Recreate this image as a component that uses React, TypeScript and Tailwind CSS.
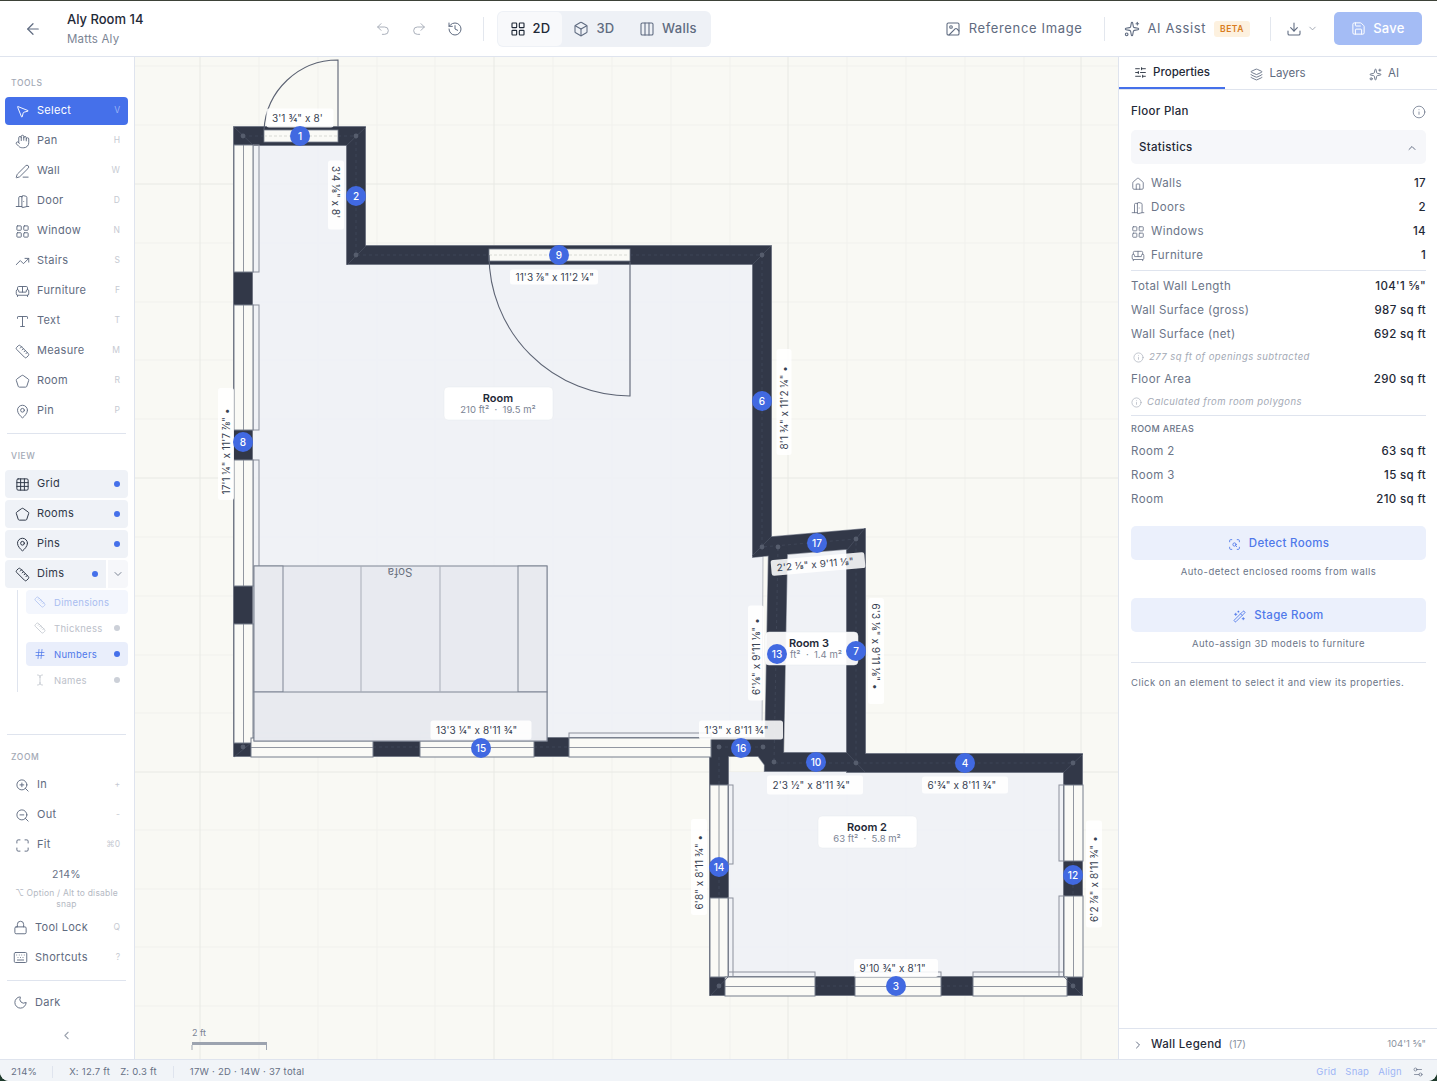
import {
  ArrowLeft, Undo2, Redo2, History, LayoutGrid, Box, Columns3, Image, Sparkles, Download, ChevronDown, ChevronUp, ChevronLeft, ChevronRight,
  Save, MousePointer2, Hand, PenLine, DoorOpen, TrendingUp, Sofa, Type, Ruler, Pentagon, MapPin, Grid3x3, Hash, TextCursor, ZoomIn, ZoomOut,
  Maximize, Lock, Keyboard, Moon, SlidersHorizontal, Layers, Info, Home, ScanSearch, WandSparkles, Settings2,
} from 'lucide-react'
import type { LucideIcon } from 'lucide-react'

const tools: [LucideIcon, string, string][] = [
  [MousePointer2, 'Select', 'V'],
  [Hand, 'Pan', 'H'],
  [PenLine, 'Wall', 'W'],
  [DoorOpen, 'Door', 'D'],
  [LayoutGrid, 'Window', 'N'],
  [TrendingUp, 'Stairs', 'S'],
  [Sofa, 'Furniture', 'F'],
  [Type, 'Text', 'T'],
  [Ruler, 'Measure', 'M'],
  [Pentagon, 'Room', 'R'],
  [MapPin, 'Pin', 'P'],
]

function ToolRow({ icon: Icon, label, hint, active }: { icon: LucideIcon; label: string; hint: string; active?: boolean }) {
  return (
    <div className={`flex items-center h-[28px] rounded-[4px] pl-[10px] pr-[8px] ${active ? 'bg-[#4570ea] text-white' : 'text-[#5f6b80]'}`}>
      <Icon className="w-[15px] h-[15px] shrink-0" strokeWidth={1.5} />
      <span className="ml-[7px] pb-[2px] text-[11px] tracking-[0.3px] flex-1">{label}</span>
      <span className={`pb-[2px] text-[8.5px] ${active ? 'text-[#9db4f5]' : 'text-[#c6cad2]'}`}>{hint}</span>
    </div>
  )
}

function ViewRow({ icon: Icon, label }: { icon: LucideIcon; label: string }) {
  return (
    <div className="flex items-center h-[28px] rounded-[4px] bg-[#eff2f7] text-[#2f3848] pl-[10px] pr-[8px]">
      <Icon className="w-[15px] h-[15px] shrink-0" strokeWidth={1.6} />
      <span className="ml-[7px] pb-[2px] text-[11px] tracking-[0.3px] flex-1">{label}</span>
      <span className="w-[6px] h-[6px] rounded-full bg-[#4570ea]" />
    </div>
  )
}

function SubRow({ icon: Icon, label, tone }: { icon: LucideIcon; label: string; tone: 'faded' | 'on' | 'off' }) {
  const cls = tone === 'on' ? 'bg-[#e9eefb] text-[#4f78ea]' : tone === 'faded' ? 'bg-[#f3f6fd] text-[#a9bdf0]' : 'text-[#bcc1ca]'
  return (
    <div className={`flex items-center h-[24px] rounded-[4px] pl-[8px] pr-[8px] ${cls}`}>
      <Icon className="w-[12px] h-[12px] shrink-0" strokeWidth={1.5} />
      <span className="ml-[8px] pt-[2px] text-[9.5px] tracking-[0.3px] flex-1">{label}</span>
      {tone !== 'faded' && <span className={`w-[6px] h-[6px] rounded-full ${tone === 'on' ? 'bg-[#4570ea]' : 'bg-[#ccd0d8]'}`} />}
    </div>
  )
}

function SectionLabel({ text }: { text: string }) {
  return <div className="h-[12px] leading-[12px] pl-[6px] text-[8.5px] font-medium tracking-[0.6px] text-[#a3a9b5]">{text}</div>
}

function Sidebar() {
  return (
    <aside className="w-[135px] shrink-0 border-r border-[#dfe4ee] bg-white px-[5px] pt-[20px] flex flex-col">
      <SectionLabel text="TOOLS" />
      <div className="mt-[8px] flex flex-col gap-[2px] w-[123px]">
        {tools.map(([icon, label, hint], i) => (
          <ToolRow key={label} icon={icon} label={label} hint={hint} active={i === 0} />
        ))}
      </div>
      <div className="mt-[8px] mx-[2px] w-[119px] border-t border-[#dfe4ee]" />
      <div className="mt-[16px]"><SectionLabel text="VIEW" /></div>
      <div className="mt-[8px] flex flex-col gap-[2px] w-[123px]">
        <ViewRow icon={Grid3x3} label="Grid" />
        <ViewRow icon={Pentagon} label="Rooms" />
        <ViewRow icon={MapPin} label="Pins" />
        <div className="flex gap-[2px]">
          <div className="w-[101px] flex items-center h-[28px] rounded-l-[4px] bg-[#eff2f7] text-[#2f3848] pl-[10px] pr-[8px]">
            <Ruler className="w-[15px] h-[15px] shrink-0" strokeWidth={1.6} />
            <span className="ml-[7px] pb-[2px] text-[11px] tracking-[0.3px] flex-1">Dims</span>
            <span className="w-[6px] h-[6px] rounded-full bg-[#4570ea]" />
          </div>
          <div className="w-[20px] h-[28px] flex items-center justify-center rounded-r-[4px] bg-[#f6f7fa] text-[#7b8494]">
            <ChevronDown className="w-[12px] h-[12px]" />
          </div>
        </div>
      </div>
      <div className="mt-[2px] ml-[12px] w-[111px] border-l border-[#dfe4ee] pl-[8px] flex flex-col gap-[2px]">
        <SubRow icon={Ruler} label="Dimensions" tone="faded" />
        <SubRow icon={Ruler} label="Thickness" tone="off" />
        <SubRow icon={Hash} label="Numbers" tone="on" />
        <SubRow icon={TextCursor} label="Names" tone="off" />
      </div>
      <div className="mt-[42px] mx-[2px] w-[119px] border-t border-[#dfe4ee]" />
      <div className="mt-[16px]"><SectionLabel text="ZOOM" /></div>
      <div className="mt-[8px] flex flex-col gap-[2px] w-[123px]">
        <ToolRow icon={ZoomIn} label="In" hint="+" />
        <ToolRow icon={ZoomOut} label="Out" hint="-" />
        <ToolRow icon={Maximize} label="Fit" hint="⌘0" />
      </div>
      <div className="mt-[8px] h-[16px] w-[123px] text-center text-[10.5px] leading-[16px] tracking-[0.3px] text-[#667085]">214%</div>
      <div className="mt-[5px] w-[123px] text-center text-[8.5px] leading-[11px] tracking-[0.2px] text-[#b4b9c3]">⌥ Option / Alt to disable snap</div>
      <div className="mt-[3px] flex flex-col gap-[2px] w-[123px]">
        <div className="flex items-center h-[28px] pl-[8px] pr-[8px] text-[#5f6b80]">
          <Lock className="w-[15px] h-[15px] shrink-0" strokeWidth={1.5} />
          <span className="ml-[7px] text-[11px] tracking-[0.3px] flex-1">Tool Lock</span>
          <span className="text-[8.5px] text-[#c6cad2]">Q</span>
        </div>
        <div className="flex items-center h-[28px] pl-[8px] pr-[8px] text-[#5f6b80]">
          <Keyboard className="w-[15px] h-[15px] shrink-0" strokeWidth={1.5} />
          <span className="ml-[7px] text-[11px] tracking-[0.3px] flex-1">Shortcuts</span>
          <span className="text-[8.5px] text-[#c6cad2]">?</span>
        </div>
      </div>
      <div className="mt-[9px] mx-[2px] w-[119px] border-t border-[#dfe4ee]" />
      <div className="mt-[7px] flex items-center h-[28px] pl-[8px] text-[#5f6b80]">
        <Moon className="w-[15px] h-[15px] shrink-0" strokeWidth={1.5} />
        <span className="ml-[7px] text-[11px] tracking-[0.3px]">Dark</span>
      </div>
      <div className="mt-[13px] w-[123px] flex justify-center text-[#9ca3af]">
        <ChevronLeft className="w-[13px] h-[13px]" />
      </div>
    </aside>
  )
}

function Header() {
  return (
    <header className="h-[56px] shrink-0 flex items-center bg-white border-b border-[#dfe4ee]">
      <ArrowLeft className="ml-[24px] w-[18px] h-[18px] text-[#5f6b80]" strokeWidth={1.6} />
      <div className="ml-[25px] w-[308px]">
        <div className="text-[13px] leading-[18px] font-medium text-[#1f2937]">Aly Room 14</div>
        <div className="text-[11.5px] leading-[18px] mt-[2px] tracking-[0.2px] text-[#7b8494]">Matts Aly</div>
      </div>
      <Undo2 className="w-[16px] h-[16px] text-[#aab0bb]" strokeWidth={1.5} />
      <Redo2 className="ml-[20px] w-[16px] h-[16px] text-[#aab0bb]" strokeWidth={1.5} />
      <History className="ml-[20px] w-[16px] h-[16px] text-[#5f6b80]" strokeWidth={1.5} />
      <div className="ml-[20px] w-px h-[24px] bg-[#e3e7ee]" />
      <div className="ml-[13px] w-[214px] h-[36px] rounded-[6px] bg-[#eef1f6] flex items-center p-[1px] text-[13px] tracking-[0.3px]">
        <div className="w-[64px] h-[34px] rounded-[5px] bg-[#f8f9fb] flex items-center justify-center gap-[7px] text-[#1f2937] font-medium">
          <LayoutGrid className="w-[16px] h-[16px]" strokeWidth={1.7} />2D
        </div>
        <div className="w-[64px] h-[34px] flex items-center justify-center gap-[7px] text-[#5f6b80] font-medium">
          <Box className="w-[16px] h-[16px]" strokeWidth={1.6} />3D
        </div>
        <div className="flex-1 h-[34px] flex items-center justify-center gap-[7px] text-[#5f6b80] font-medium">
          <Columns3 className="w-[16px] h-[16px]" strokeWidth={1.6} />Walls
        </div>
      </div>
      <div className="ml-auto mr-[15px] flex items-center text-[#5f6b80]">
        <Image className="w-[16px] h-[16px]" strokeWidth={1.6} />
        <span className="ml-[8px] text-[13px] tracking-[0.65px]">Reference Image</span>
        <div className="ml-[21px] w-px h-[24px] bg-[#e3e7ee]" />
        <Sparkles className="ml-[19px] w-[16px] h-[16px]" strokeWidth={1.6} />
        <span className="ml-[8px] text-[13px] tracking-[0.6px]">AI Assist</span>
        <span className="ml-[8px] h-[16px] w-[36px] text-center rounded-[3px] bg-[#fdf1df] text-[#d97c20] text-[8.5px] font-semibold leading-[16px] tracking-[0.5px]">BETA</span>
        <div className="ml-[20px] w-px h-[24px] bg-[#e3e7ee]" />
        <Download className="ml-[15px] w-[16px] h-[16px]" strokeWidth={1.6} />
        <ChevronDown className="ml-[5px] w-[11px] h-[11px] text-[#9ca3af]" />
        <div className="ml-[16px] w-[88px] h-[33px] rounded-[5px] bg-[#a4bcf5] flex items-center justify-center gap-[7px] text-white text-[13px] font-medium tracking-[0.3px]">
          <Save className="w-[15px] h-[15px]" strokeWidth={1.6} />Save
        </div>
      </div>
    </header>
  )
}

function StatRow({ label, value, icon: Icon }: { label: string; value: string; icon?: LucideIcon }) {
  return (
    <div className="flex items-center h-[24px] text-[11.5px]">
      {Icon && <Icon className="w-[14px] h-[14px] mr-[6px] text-[#667085]" strokeWidth={1.4} />}
      <span className="text-[#6b7588] tracking-[0.4px] flex-1">{label}</span>
      <span className="text-[#1f2937] font-medium tracking-[0.35px]">{value}</span>
    </div>
  )
}

function Note({ text, indent }: { text: string; indent?: boolean }) {
  return (
    <div className={`flex items-center h-[20px] text-[9.5px] italic text-[#a3a9b5] tracking-[0.45px] ${indent ? 'pl-[2px]' : ''}`}>
      <Info className="w-[11px] h-[11px] mr-[5px]" strokeWidth={1.4} />
      {text}
    </div>
  )
}

function RightPanel() {
  return (
    <aside className="w-[319px] shrink-0 border-l border-[#dfe4ee] bg-white flex flex-col">
      <div className="h-[33px] shrink-0 flex border-b border-[#dfe4ee] text-[11.5px]">
        <div className="w-[106px] h-[32px] pt-[1px] border-b-2 border-[#4570ea] flex items-center justify-center gap-[6px] text-[#1f2937] font-medium">
          <SlidersHorizontal className="w-[13px] h-[13px]" strokeWidth={1.6} />Properties
        </div>
        <div className="w-[106px] pt-[2px] flex items-center justify-center gap-[6px] text-[#5f6b80]">
          <Layers className="w-[13px] h-[13px]" strokeWidth={1.6} />Layers
        </div>
        <div className="w-[106px] pt-[2px] flex items-center justify-center gap-[6px] text-[#5f6b80]">
          <Sparkles className="w-[13px] h-[13px]" strokeWidth={1.6} />AI
        </div>
      </div>
      <div className="flex-1 px-[12px] pr-[11px]">
        <div className="h-[40px] pt-[3px] flex items-center justify-between text-[11.5px] font-medium tracking-[0.3px] text-[#1f2937]">
          Floor Plan
          <Info className="w-[14px] h-[14px] text-[#667085]" strokeWidth={1.3} />
        </div>
        <div className="h-[34px] pt-[2px] rounded-[5px] bg-[#f6f7fa] flex items-center justify-between px-[8px] text-[11.5px] font-medium tracking-[0.3px] text-[#1f2937]">
          Statistics
          <ChevronUp className="w-[12px] h-[12px] text-[#667085]" />
        </div>
        <div className="mt-[8px]">
          <StatRow icon={Home} label="Walls" value="17" />
          <StatRow icon={DoorOpen} label="Doors" value="2" />
          <StatRow icon={LayoutGrid} label="Windows" value="14" />
          <StatRow icon={Sofa} label="Furniture" value="1" />
        </div>
        <div className="mt-[2px] border-t border-[#dfe4ee]" />
        <div className="mt-[4px]">
          <StatRow label="Total Wall Length" value={'104\'1 ⅝"'} />
          <StatRow label="Wall Surface (gross)" value="987 sq ft" />
          <StatRow label="Wall Surface (net)" value="692 sq ft" />
          <Note text="277 sq ft of openings subtracted" indent />
          <div className="mt-[1px]"><StatRow label="Floor Area" value="290 sq ft" /></div>
          <Note text="Calculated from room polygons" />
        </div>
        <div className="mt-[3px] border-t border-[#dfe4ee]" />
        <div className="mt-[6px] h-[14px] leading-[14px] text-[9px] font-medium tracking-[0.3px] text-[#6b7588]">ROOM AREAS</div>
        <div className="mt-[4px]">
          <StatRow label="Room 2" value="63 sq ft" />
          <StatRow label="Room 3" value="15 sq ft" />
          <StatRow label="Room" value="210 sq ft" />
        </div>
        <div className="mt-[14px] h-[34px] pt-[2px] rounded-[5px] bg-[#ebf0fc] flex items-center justify-center gap-[8px] text-[11.5px] font-medium tracking-[0.3px] text-[#4f78ea]">
          <ScanSearch className="w-[13px] h-[13px]" strokeWidth={1.6} />Detect Rooms
        </div>
        <div className="mt-[5px] h-[14px] leading-[14px] text-center text-[9.5px] tracking-[0.5px] text-[#6b7588]">Auto-detect enclosed rooms from walls</div>
        <div className="mt-[19px] h-[34px] pt-[2px] rounded-[5px] bg-[#ebf0fc] flex items-center justify-center gap-[8px] text-[11.5px] font-medium tracking-[0.3px] text-[#4f78ea]">
          <WandSparkles className="w-[13px] h-[13px]" strokeWidth={1.6} />Stage Room
        </div>
        <div className="mt-[5px] h-[14px] leading-[14px] text-center text-[9.5px] tracking-[0.45px] text-[#6b7588]">Auto-assign 3D models to furniture</div>
        <div className="mt-[11px] border-t border-[#dfe4ee]" />
        <div className="mt-[13px] h-[14px] leading-[14px] text-[9.5px] tracking-[0.5px] text-[#6b7588]">Click on an element to select it and view its properties.</div>
      </div>
      <div className="h-[31px] pt-[1px] shrink-0 border-t border-[#dfe4ee] flex items-center pl-[13px] pr-[11px]">
        <ChevronRight className="w-[12px] h-[12px] text-[#667085]" />
        <span className="ml-[7px] text-[11.5px] font-medium tracking-[0.3px] text-[#1f2937]">Wall Legend</span>
        <span className="ml-[7px] text-[10px] text-[#8a92a0] flex-1">(17)</span>
        <span className="text-[9.5px] text-[#8a92a0]">104'1 ⅝"</span>
      </div>
    </aside>
  )
}

const minorX = [259, 318, 377, 435, 553, 612, 671, 730, 847, 906, 965, 1024]
const majorX = [200, 494, 788, 1081]
const minorY = [66, 125, 243, 302, 360, 419, 537, 596, 655, 713, 830, 889, 947, 1006]
const majorY = [184, 478, 772, 1065]

// [x, y, w, h] of openings cut into the walls
const vWindows = [
  [234, 145, 19, 127], [234, 305, 19, 125], [234, 460, 19, 126], [234, 624, 19, 119],
  [710, 785, 18, 77], [710, 898, 18, 79], [1064, 785, 19, 76], [1064, 896, 19, 81],
]
const hWindows = [
  [251, 738, 122, 19], [420, 738, 114, 19], [569, 738, 142, 19],
  [725, 977, 90, 19], [855, 977, 86, 19], [973, 977, 94, 19],
]
const protrusions = [
  [253, 145, 6, 127], [253, 305, 6, 125], [253, 460, 6, 126], [253, 624, 6, 68],
  [251, 733, 122, 5], [420, 733, 114, 5], [569, 733, 142, 5],
  [728, 785, 5, 79], [728, 898, 5, 79], [1059, 785, 5, 76], [1059, 896, 5, 81],
  [725, 972, 90, 5], [855, 972, 86, 5], [973, 972, 94, 5],
]
const dims: [number, number, number, number, number, string][] = [
  [300, 118, 67, 19, 0, '3\'1 ¾" x 8\''],
  [336, 195, 69, 16, 90, '3\'4 ⅛" x 8\''],
  [554, 277, 88, 15, 0, '11\'3 ⅞" x 11\'2 ¼"'],
  [226, 444, 112, 16, -90, '17\'1 ¼" x 11\'7 ⅞" •'],
  [784, 402, 106, 15, -90, '8\'1 ¾" x 11\'2 ¼" •'],
  [481, 730, 101, 19, 0, '13\'3 ¼" x 8\'11 ¾"'],
  [741, 730, 84, 19, 0, '1\'3" x 8\'11 ¾"'],
  [818, 564, 94, 16, -5, '2\'2 ⅛" x 9\'11 ⅛"'],
  [876, 651, 106, 16, 90, '6\'3 ⅛" x 9\'11 ⅛" •'],
  [756, 653, 95, 16, -90, '6\'⅛" x 9\'11 ⅛" •'],
  [815, 785, 96, 19, 0, '2\'3 ½" x 8\'11 ¾"'],
  [965, 785, 86, 17, 0, '6\'¾" x 8\'11 ¾"'],
  [699, 867, 96, 16, -90, '6\'8" x 8\'11 ¾" •'],
  [1094, 874, 107, 16, -90, '6\'2 ⅞" x 8\'11 ¾" •'],
  [896, 968, 84, 18, 0, '9\'10 ¾" x 8\'1"'],
]
const badges: [number, number, number][] = [
  [1, 300, 136], [2, 356, 196], [9, 559, 255], [6, 762, 401], [8, 243, 442], [17, 817, 543], [13, 777, 654], [7, 856, 651],
  [15, 481, 748], [16, 741, 748], [10, 816, 762], [4, 965, 763], [14, 719, 867], [12, 1073, 875], [3, 896, 986],
]
const joints = [
  [243, 136], [356, 136], [356, 255], [762, 255], [762, 547], [778, 547], [856, 539], [719, 747], [763, 747], [774, 762],
  [856, 763], [1073, 763], [1073, 986], [719, 986], [243, 747],
]

const wallLoop = 'M243 136H356V255H762V547L856 539V763H1073V986H719V747H243Z'
const wallInner = 'M778 547L774 762H856M719 747H763L774 762'

function RoomTag({ x, y, w, h, name, area, nx, ax }: { x: number; y: number; w: number; h: number; name: string; area: string; nx: number; ax: number }) {
  return (
    <g>
      <rect x={x} y={y} width={w} height={h} rx={4} fill="#ffffff" fillOpacity={0.94} stroke="#e6e8ed" strokeWidth={0.5} />
      <text x={nx} y={y + 15} textAnchor="middle" fontSize={11} fontWeight={600} fill="#1f2937">{name}</text>
      <text x={ax} y={y + 26} textAnchor="middle" fontSize={9.5} fill="#7b8494">{area}</text>
    </g>
  )
}

function FloorPlan() {
  return (
    <svg className="block w-full h-full" viewBox="135 57 983 1002" fontFamily="Inter, sans-serif">
      {minorX.map((x) => <line key={x} x1={x} x2={x} y1={57} y2={1059} stroke="#f1f1ed" />)}
      {minorY.map((y) => <line key={y} x1={135} x2={1118} y1={y} y2={y} stroke="#f1f1ed" />)}
      {majorX.map((x) => <line key={x} x1={x} x2={x} y1={57} y2={1059} stroke="#e8e9e4" />)}
      {majorY.map((y) => <line key={y} x1={135} x2={1118} y1={y} y2={y} stroke="#e8e9e4" />)}

      <g fill="#eef1f6" fillOpacity={0.9}>
        <path d="M253 145H347V265H752V556H763L762 738H253Z" />
        <path d="M787 555L847 548V753H785Z" />
        <path d="M728 772H1064V977H728Z" />
      </g>
      <line x1={763} y1={556} x2={762} y2={738} stroke="#a8adb8" strokeWidth={0.8} />

      <g fill="none" strokeLinejoin="miter" strokeMiterlimit={6}>
        <path d={wallLoop} stroke="#8b909c" strokeWidth={20} />
        <path d={wallInner} stroke="#8b909c" strokeWidth={20} />
        <path d={wallLoop} stroke="#323848" strokeWidth={18.6} />
        <path d={wallInner} stroke="#323848" strokeWidth={18.6} />
      </g>

      {protrusions.map(([x, y, w, h], i) => (
        <rect key={i} x={x} y={y} width={w} height={h} fill="none" stroke="#8b909c" strokeWidth={1} />
      ))}
      {vWindows.map(([x, y, w, h], i) => (
        <g key={i}>
          <rect x={x} y={y} width={w} height={h} fill="#fafaf6" stroke="#777e8c" strokeWidth={1} />
          <line x1={x + w / 2} x2={x + w / 2} y1={y} y2={y + h} stroke="#777e8c" strokeWidth={0.8} />
        </g>
      ))}
      {hWindows.map(([x, y, w, h], i) => (
        <g key={i}>
          <rect x={x} y={y} width={w} height={h} fill="#fafaf6" stroke="#777e8c" strokeWidth={1} />
          <line x1={x} x2={x + w} y1={y + h / 2} y2={y + h / 2} stroke="#777e8c" strokeWidth={0.8} />
        </g>
      ))}

      {/* door openings */}
      <rect x={264} y={130} width={74} height={12} fill="#fafaf6" stroke="#777e8c" strokeWidth={0.8} />
      <line x1={264} x2={338} y1={136} y2={136} stroke="#c9ccc6" strokeWidth={0.7} strokeDasharray="3 2" />
      <rect x={489} y={249} width={141} height={12} fill="#fafaf6" stroke="#777e8c" strokeWidth={0.8} />
      <line x1={489} x2={630} y1={255} y2={255} stroke="#c9ccc6" strokeWidth={0.7} strokeDasharray="3 2" />
      <g fill="none" stroke="#5c6373" strokeWidth={1.1}>
        <path d="M338 127V60A74 74 0 0 0 264 130" />
        <path d="M630 262V396A141 141 0 0 1 489 255" />
      </g>

      {/* wall centre lines and joints */}
      <g fill="none" stroke="#4b5264" strokeWidth={0.5} strokeDasharray="3 3">
        <path d="M243 136H264M338 136H356V255H489M630 255H762V547L856 539V763H1073M1073 861V896M856 763H774L778 547M719 747H763M719 862V898M719 757V785M815 986H855M941 986H973M373 747H420M534 747H569" />
      </g>
      <g stroke="#4a5163" strokeWidth={0.7}>
        <line x1={234} y1={127} x2={253} y2={145} />
        <line x1={366} y1={127} x2={347} y2={145} />
        <line x1={347} y1={265} x2={366} y2={246} />
        <line x1={771} y1={246} x2={752} y2={265} />
        <line x1={752} y1={556} x2={771} y2={537} />
        <line x1={865} y1={528} x2={847} y2={550} />
        <line x1={847} y1={753} x2={865} y2={772} />
        <line x1={1083} y1={754} x2={1064} y2={772} />
        <line x1={1083} y1={996} x2={1064} y2={977} />
        <line x1={710} y1={996} x2={728} y2={977} />
        <line x1={234} y1={757} x2={251} y2={743} />
      </g>
      {joints.map(([x, y]) => <circle key={`${x}-${y}`} cx={x} cy={y} r={2.4} fill="#565d6d" />)}

      {/* sofa */}
      <g fill="#e7eaef" fillOpacity={0.93} stroke="#7f8594" strokeWidth={1}>
        <rect x={254} y={566} width={293} height={175} />
        <rect x={254} y={566} width={29} height={126} />
        <rect x={518} y={566} width={29} height={126} />
        <rect x={254} y={692} width={293} height={49} />
      </g>
      <g stroke="#a8adb8" strokeWidth={1}>
        <line x1={361} x2={361} y1={566} y2={692} />
        <line x1={440} x2={440} y1={566} y2={692} />
      </g>
      <text transform="translate(400 568) rotate(180)" textAnchor="middle" fontSize={11.5} fill="#6b7280">Sofa</text>

      <RoomTag x={444} y={387} w={109} h={33} name="Room" area={'210 ft²\u00a0\u00a0·\u00a0\u00a019.5 m²'} nx={498} ax={498} />
      <RoomTag x={765} y={632} w={93} h={33} name="Room 3" area={'ft²\u00a0\u00a0·\u00a0\u00a01.4 m²'} nx={809} ax={816} />
      <RoomTag x={818} y={816} w={99} h={32} name="Room 2" area={'63 ft²\u00a0\u00a0·\u00a0\u00a05.8 m²'} nx={867} ax={867} />

      {dims.map(([cx, cy, w, h, rot, text]) => (
        <g key={text} transform={`translate(${cx} ${cy}) rotate(${rot})`}>
          <rect x={-w / 2} y={-h / 2} width={w} height={h} rx={2.5} fill="#ffffff" fillOpacity={0.88} />
          <text x={-w / 2 + 5.5} y={3.6} fontSize={10} letterSpacing={0.1} fill="#374151">{text}</text>
        </g>
      ))}

      {badges.map(([n, x, y]) => (
        <g key={n}>
          <circle cx={x} cy={y} r={10} fill="#4169e1" />
          <text x={x} y={y + 3.6} textAnchor="middle" fontSize={10} fontWeight={500} fill="#ffffff">{n}</text>
        </g>
      ))}

      {/* scale bar */}
      <text x={192} y={1036} fontSize={9} fill="#7b8494">2 ft</text>
      <rect x={192} y={1042} width={75} height={3} fill="#9ca3af" />
      <path d="M192 1045V1050M266.5 1045V1050" stroke="#9ca3af" fill="none" />
    </svg>
  )
}

function StatusBar() {
  return (
    <footer className="h-[22px] pt-[3px] shrink-0 bg-[#f1f4f8] border-t border-[#dfe4ee] flex items-center text-[9.5px] tracking-[0.25px] text-[#667085]">
      <span className="ml-[11px]">214%</span>
      <span className="ml-[15px] w-px h-[12px] bg-[#dfe4ee]" />
      <span className="ml-[16px]">X: 12.7 ft</span>
      <span className="ml-[10px]">Z: 0.3 ft</span>
      <span className="ml-[16px] w-px h-[12px] bg-[#dfe4ee]" />
      <span className="ml-[16px] flex-1">17W · 2D · 14W · 37 total</span>
      <span className="text-[#9db4f5]">Grid</span>
      <span className="ml-[9px] text-[#9db4f5]">Snap</span>
      <span className="ml-[9px] text-[#9db4f5]">Align</span>
      <Settings2 className="ml-[10px] mr-[13px] w-[12px] h-[12px]" strokeWidth={1.4} />
    </footer>
  )
}

export default function App() {
  return (
    <div className="w-[1437px] h-[1081px] overflow-hidden bg-[#1f3b2d] font-['Inter',sans-serif]">
      <div className="w-full h-full rounded-b-[9px] overflow-hidden flex flex-col bg-white">
        <div className="h-px shrink-0 bg-[#3d4238]" />
        <Header />
        <div className="flex-1 flex min-h-0">
          <Sidebar />
          <main className="flex-1 min-w-0 bg-[#f9f9f4]">
            <FloorPlan />
          </main>
          <RightPanel />
        </div>
        <StatusBar />
      </div>
    </div>
  )
}
